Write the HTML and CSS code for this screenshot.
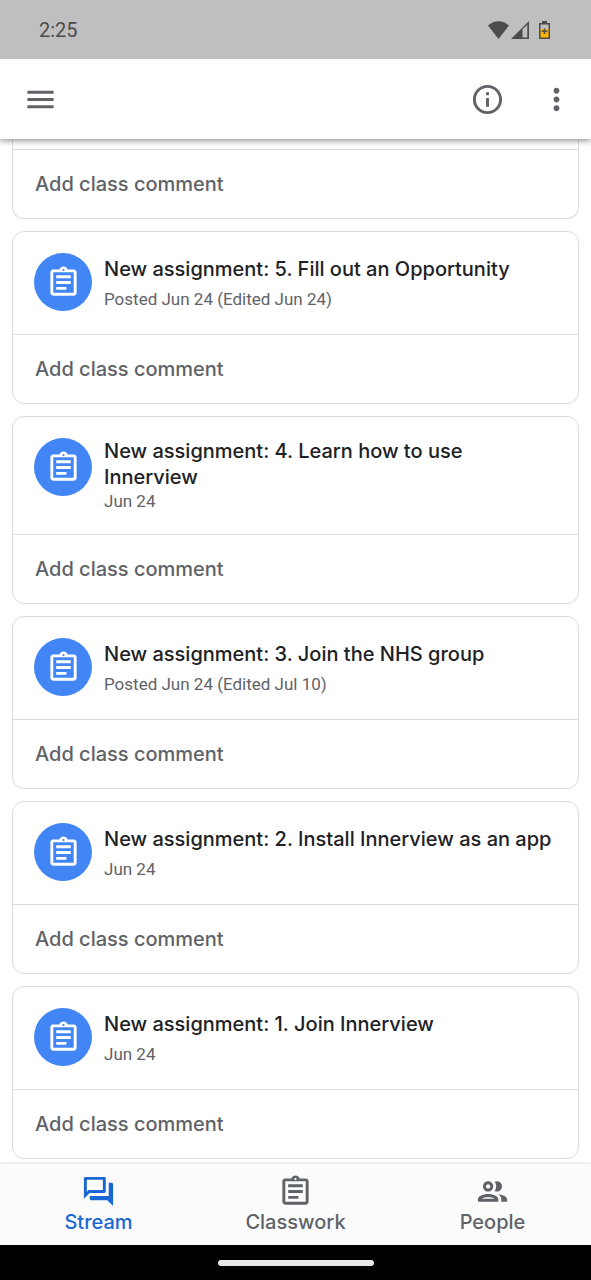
FILE: index.html
```html
<!DOCTYPE html>
<html lang="en">
<head>
<meta charset="utf-8">
<meta name="viewport" content="width=device-width, initial-scale=1">
<title>Class stream</title>
<link rel="stylesheet" href="styles.css">
</head>
<body>
<svg class="sprite" aria-hidden="true">
  <symbol id="clipboard" viewBox="0 0 24 24">
    <path d="M7 15h7v2H7zm0-4h10v2H7zm0-4h10v2H7zm12-4h-4.180C14.400 1.840 13.300 1 12 1c-1.300 0-2.400.84-2.820 2H5c-.14 0-.27.010-.4.040-.39.080-.74.280-1.010.55-.18.180-.33.400-.43.640-.1.230-.16.490-.16.770v14c0 .27.060.54.160.78s.250.450.430.640c.27.270.620.470 1.010.550.130.020.260.030.400.030h14c1.100 0 2-.9 2-2V5c0-1.100-.9-2-2-2zm-7-.25c.410 0 .750.340.750.750s-.34.750-.75.750-.75-.34-.75-.75.340-.75.750-.75zM19 19H5V5h14v14z"/>
  </symbol>
</svg>

<div class="statusbar">
  <time class="clock">2:25</time>
  <div class="indicators">
    <svg class="wifi" viewBox="0 0 21 18" aria-hidden="true"><path d="M0 4.500C6-1.200 15-1.200 21 4.500L10.500 18z"/></svg>
    <svg class="signal" viewBox="0 0 18 18" aria-hidden="true"><path fill-rule="evenodd" d="M18 0v18H0zM11.500 8.300v8.100h4.800V3.700z"/></svg>
    <svg class="battery" viewBox="0 0 11 18" aria-hidden="true"><path d="M3 0h5v2h3v16H0V2h3z"/><path class="battery-empty" d="M1.500 3.500h8V8h-8z"/><path class="battery-level" d="M1.500 8h8v8.500h-8z"/><path d="M4.700 7.500h1.600v2h2v1.600h-2v2H4.700v-2h-2V9.500h2z"/></svg>
  </div>
</div>

<header class="appbar">
  <button class="icon-button" type="button" aria-label="Open menu">
    <svg class="icon" viewBox="0 0 24 24"><path d="M3 18h18v-2H3zm0-5h18v-2H3zm0-7v2h18V6z"/></svg>
  </button>
  <div class="appbar-actions">
    <button class="icon-button" type="button" aria-label="Class info">
      <svg class="icon" viewBox="0 0 24 24"><path d="M11 7h2v2h-2zm0 4h2v6h-2zm1-9C6.480 2 2 6.480 2 12s4.480 10 10 10 10-4.480 10-10S17.520 2 12 2zm0 18c-4.410 0-8-3.590-8-8s3.590-8 8-8 8 3.590 8 8-3.590 8-8 8z"/></svg>
    </button>
    <button class="icon-button" type="button" aria-label="More options">
      <svg class="icon" viewBox="0 0 24 24"><path d="M12 8c1.100 0 2-.9 2-2s-.9-2-2-2-2 .9-2 2 .9 2 2 2zm0 2c-1.100 0-2 .9-2 2s.9 2 2 2 2-.9 2-2-.9-2-2-2zm0 6c-1.100 0-2 .9-2 2s.9 2 2 2 2-.9 2-2-.9-2-2-2z"/></svg>
    </button>
  </div>
</header>

<main class="stream">
  <article class="card card-continued">
    <button class="comment" type="button">Add class comment</button>
  </article>
  <article class="card">
    <div class="post">
      <span class="badge"><svg class="icon"><use href="#clipboard"/></svg></span>
      <div class="post-text">
        <h2 class="title">New assignment: 5. Fill out an Opportunity</h2>
        <p class="date">Posted Jun 24 (Edited Jun 24)</p>
      </div>
    </div>
    <button class="comment" type="button">Add class comment</button>
  </article>
  <article class="card">
    <div class="post post-long">
      <span class="badge"><svg class="icon"><use href="#clipboard"/></svg></span>
      <div class="post-text">
        <h2 class="title">New assignment: 4. Learn how to use Innerview</h2>
        <p class="date">Jun 24</p>
      </div>
    </div>
    <button class="comment" type="button">Add class comment</button>
  </article>
  <article class="card">
    <div class="post">
      <span class="badge"><svg class="icon"><use href="#clipboard"/></svg></span>
      <div class="post-text">
        <h2 class="title">New assignment: 3. Join the NHS group</h2>
        <p class="date">Posted Jun 24 (Edited Jul 10)</p>
      </div>
    </div>
    <button class="comment" type="button">Add class comment</button>
  </article>
  <article class="card">
    <div class="post">
      <span class="badge"><svg class="icon"><use href="#clipboard"/></svg></span>
      <div class="post-text">
        <h2 class="title">New assignment: 2. Install Innerview as an app</h2>
        <p class="date">Jun 24</p>
      </div>
    </div>
    <button class="comment" type="button">Add class comment</button>
  </article>
  <article class="card">
    <div class="post">
      <span class="badge"><svg class="icon"><use href="#clipboard"/></svg></span>
      <div class="post-text">
        <h2 class="title">New assignment: 1. Join Innerview</h2>
        <p class="date">Jun 24</p>
      </div>
    </div>
    <button class="comment" type="button">Add class comment</button>
  </article>
</main>

<nav class="tabs">
  <a class="tab tab-active" href="#stream" aria-current="page">
    <svg class="icon" viewBox="0 0 24 24"><path d="M15 4v7H5.170L4 12.170V4h11m1-2H3c-.55 0-1 .45-1 1v14l4-4h10c.550 0 1-.45 1-1V3c0-.55-.45-1-1-1zm5 4h-2v9H6v2c0 .550.450 1 1 1h11l4 4V7c0-.55-.45-1-1-1z"/></svg>
    <span>Stream</span>
  </a>
  <a class="tab" href="#classwork">
    <svg class="icon"><use href="#clipboard"/></svg>
    <span>Classwork</span>
  </a>
  <a class="tab" href="#people">
    <svg class="icon" viewBox="0 0 24 24"><path d="M9 13.750c-2.340 0-7 1.170-7 3.500V19h14v-1.750c0-2.330-4.660-3.500-7-3.500zM4.340 17c.840-.58 2.870-1.250 4.660-1.250s3.820.670 4.660 1.250H4.340zM9 12c1.930 0 3.500-1.570 3.500-3.500S10.930 5 9 5 5.500 6.570 5.500 8.500 7.070 12 9 12zm0-5c.830 0 1.500.670 1.500 1.500S9.830 10 9 10s-1.500-.67-1.500-1.500S8.170 7 9 7zm7.040 6.810c1.160.840 1.960 1.960 1.960 3.440V19h4v-1.750c0-2.020-3.500-3.170-5.960-3.440zM15 12c1.930 0 3.500-1.570 3.500-3.500S16.930 5 15 5c-.54 0-1.040.130-1.500.350.630.890 1 1.980 1 3.150s-.37 2.260-1 3.150c.460.220.960.350 1.500.350z"/></svg>
    <span>People</span>
  </a>
</nav>
<div class="gesture"><span class="handle"></span></div>
</body>
</html>
```

FILE: styles.css
```css
* {
  box-sizing: border-box;
}

body {
  margin: 0;
  min-height: 100vh;
  display: flex;
  flex-direction: column;
  background: #fff;
  color: #202124;
  font-family: Inter, "Liberation Sans", sans-serif;
}

button {
  border: 0;
  background: none;
  color: inherit;
  cursor: pointer;
}

.sprite {
  display: none;
}

.icon {
  display: block;
  width: 35px;
  height: 35px;
  fill: currentColor;
}

.statusbar {
  position: relative;
  z-index: 2;
  display: flex;
  align-items: center;
  justify-content: space-between;
  height: 59px;
  padding: 0 41px 0 39px;
  background: #bfbfbf;
  color: #4c4c4c;
}

.clock {
  font: 20px/24px Roboto, sans-serif;
}

.indicators {
  display: flex;
  align-items: center;
  fill: currentColor;
}

.wifi {
  width: 21px;
  height: 18px;
}

.signal {
  width: 18px;
  height: 18px;
  margin: 0 10px 0 2px;
}

.battery {
  width: 11px;
  height: 18px;
}

.battery-empty {
  fill: #bfbfbf;
}

.battery-level {
  fill: #fbb400;
}

.appbar {
  position: sticky;
  top: 0;
  z-index: 1;
  display: flex;
  align-items: center;
  justify-content: space-between;
  height: 80px;
  padding: 0 17px 0 23px;
  background: #fff;
  color: #5f6368;
  box-shadow: 0 2px 6px rgba(0, 0, 0, .4);
}

.appbar-actions {
  display: flex;
  gap: 34px;
}

.icon-button {
  padding: 0;
}

.stream {
  flex: 1;
  display: flex;
  flex-direction: column;
  gap: 12px;
  padding: 0 12px 5px;
}

.card {
  border: 1px solid #dadce0;
  border-radius: 12px;
}

.card-continued {
  padding-top: 10px;
  border-top: 0;
  border-radius: 0 0 12px 12px;
}

.post {
  display: flex;
  gap: 12px;
  min-height: 102px;
  padding: 21px 20px 21px 21px;
}

.badge {
  display: grid;
  place-items: center;
  flex: none;
  width: 58px;
  height: 58px;
  border-radius: 50%;
  background: #4285f4;
  color: #fff;
}

.post-text {
  padding-top: 3px;
}

.title {
  margin: 0;
  font-size: 20px;
  font-weight: 500;
  line-height: 26px;
}

.date {
  margin: 6px 0 0;
  color: #5f6368;
  font: 17px/22px Roboto, sans-serif;
}

.post-long {
  min-height: 117px;
}

.post-long .post-text {
  padding-top: 0;
}

.post-long .date {
  margin-top: 0;
}

.comment {
  display: block;
  width: 100%;
  height: 69px;
  padding: 0 22px;
  border-top: 1px solid #dadce0;
  color: #5f6368;
  font: 500 20px/26px Inter, sans-serif;
  text-align: left;
}

.tabs {
  position: sticky;
  bottom: 0;
  display: grid;
  grid-template-columns: repeat(3, 1fr);
  height: 81px;
  background: #fbfbfb;
  box-shadow: 0 -1px 3px rgba(0, 0, 0, .12);
}

.tab {
  display: flex;
  flex-direction: column;
  align-items: center;
  padding-top: 10px;
  color: #5f6368;
  font-size: 20px;
  font-weight: 500;
  line-height: 26px;
  text-decoration: none;
}

.tab-active {
  color: #1967d2;
}

.gesture {
  display: grid;
  place-items: center;
  height: 35px;
  background: #000;
}

.handle {
  width: 156px;
  height: 6px;
  border-radius: 3px;
  background: #e8e8e8;
}
```
